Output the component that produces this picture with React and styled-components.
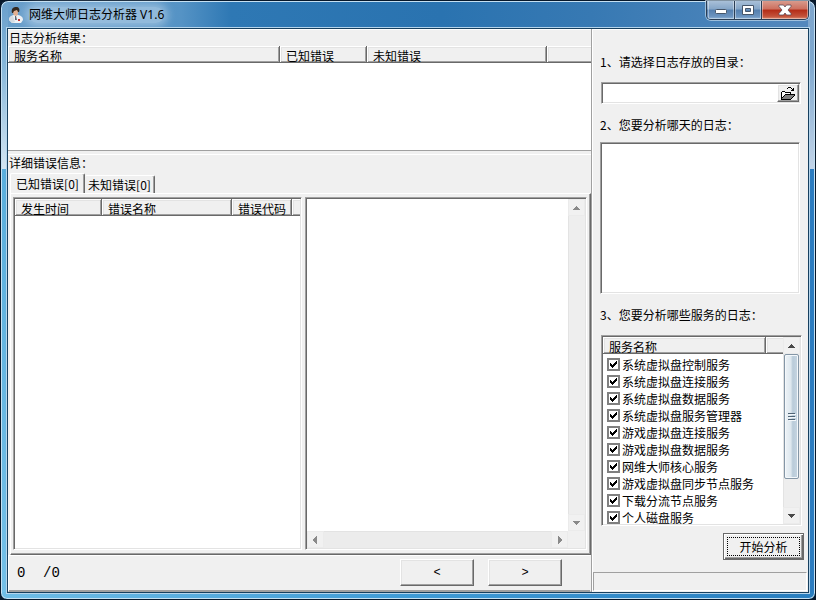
import React from "react";
import styled, { createGlobalStyle, css } from "styled-components";

const GlobalStyle = createGlobalStyle`
  * {
    box-sizing: border-box;
  }

  body {
    margin: 0;
    background: #07182b;
    color: #000;
    font-family: "Noto Sans CJK SC", "Liberation Sans", sans-serif;
    font-size: 12px;
    line-height: 16px;
  }

  button,
  input,
  textarea {
    font: inherit;
    color: inherit;
  }
`;

const sunken = css`
  border: 1px solid;
  border-color: #a0a0a0 #fff #fff #a0a0a0;
  box-shadow: inset 1px 1px 0 #696969, inset -1px -1px 0 #e3e3e3;
  padding: 1px;
  background: #fff;
`;

const raised = css`
  border: 1px solid;
  border-color: #fff #696969 #696969 #fff;
  box-shadow: inset -1px -1px 0 #a0a0a0, inset 1px 1px 0 #e3e3e3;
  background: #f0f0f0;
`;

const Window = styled.div`
  display: flex;
  flex-direction: column;
  min-height: 100vh;
  padding: 1px 5px 5px;
  border: 1px solid #07182b;
  border-radius: 8px 8px 7px 7px;
  box-shadow: inset 0 0 0 1px #c5e0f2;
  background:
    linear-gradient(90deg, #6fbde6, #3f9bd6 50%, #2a7fc0) bottom / 100% 7px no-repeat,
    linear-gradient(
        #6a9fcb,
        #83b5d9 60px,
        #d3e5f2 168px,
        #5aaedc 168px,
        #74c0e8 100%
      )
      left / 7px 100% no-repeat,
    linear-gradient(#7fa6cd, #7ea8cf 60px, #c2d4e8 168px, #2b7cc0 168px, #2b7cc0 100%)
      right / 7px 100% no-repeat,
    linear-gradient(90deg, #6a9fcb, #5593c5 180px, #2e78b4 230px, #2a73b0 440px, #3779b3 590px, #5388bd 800px);
`;

const TitleBar = styled.header`
  display: flex;
  height: 25px;
  padding: 0 1px 0 3px;
`;

const Title = styled.h1`
  display: flex;
  align-items: center;
  gap: 6px;
  flex: 1;
  margin: 0;
  font-family: "Noto Sans", "Noto Sans CJK SC", sans-serif;
  font-size: 12px;
  font-weight: normal;
`;

const TitleText = styled.span`
  border-radius: 10px;
  background: rgba(214, 231, 244, 0.45);
  box-shadow: 0 0 8px 4px rgba(214, 231, 244, 0.45);
`;

const WindowButtons = styled.div`
  display: flex;
  height: 19px;
  margin-top: -1px;
  border: 1px solid #2a3d54;
  border-top: 0;
  border-radius: 0 0 5px 5px;
  box-shadow: 0 0 0 1px rgba(214, 231, 244, 0.6);
  overflow: hidden;
`;

const WindowButton = styled.button`
  display: flex;
  align-items: center;
  justify-content: center;
  width: ${(p) => (p.$close ? 47 : 27)}px;
  padding: 0;
  border: 0;
  border-left: 1px solid ${(p) => (p.$first ? "transparent" : "#2a3d54")};
  box-shadow: inset 1px 0 0 rgba(255, 255, 255, 0.4),
    inset -1px -1px 0 rgba(255, 255, 255, 0.4);
  background: ${(p) =>
    p.$close
      ? "linear-gradient(#d99a8c, #cd6f5e 45%, #b32c17 50%, #c3523a 85%, #d98a70)"
      : "linear-gradient(#a9c0d8, #84a5c7 45%, #557fae 50%, #6b93bf 85%, #8fb3d6)"};
`;

const Client = styled.main`
  display: flex;
  flex: 1;
  border: 1px solid #b5d5ec;
  outline: 1px solid #17405f;
  outline-offset: -2px;
  padding: 1px;
  background: #f0f0f0;
`;

const LeftPane = styled.div`
  display: flex;
  flex-direction: column;
  flex: 1;
  min-width: 0;
  border-right: 1px solid #a0a0a0;
`;

const RightPane = styled.form`
  display: flex;
  flex-direction: column;
  flex: 0 0 216px;
  border-left: 1px solid #fff;
  border-top: 1px solid #fff;
`;

const SectionTitle = styled.h2`
  margin: 0;
  height: 17px;
  padding-left: 1px;
  font-size: 12px;
  font-weight: normal;
  line-height: 15px;
`;

const Results = styled.section`
  height: 122px;
  border-top: 1px solid #fff;
  border-bottom: 1px solid #a0a0a0;
  background: #fff;

  ${SectionTitle} {
    height: 16px;
    background: #f0f0f0;
  }
`;

const Details = styled.section`
  display: flex;
  flex-direction: column;
  flex: 1;
  margin-top: 3px;
  border-top: 1px solid #fff;
`;

const Table = styled.table`
  width: 100%;
  table-layout: fixed;
  border-collapse: separate;
  border-spacing: 0;
`;

const HeadCell = styled.th`
  width: ${(p) => (p.$width ? p.$width + "px" : "auto")};
  height: 17px;
  padding: 2px 0 0 6px;
  border: 0;
  box-shadow: inset -1px -1px 0 #696969, inset 1px 1px 0 #fff,
    inset -2px -2px 0 #a0a0a0, inset 2px 2px 0 #e3e3e3;
  background: #f0f0f0;
  font-weight: normal;
  line-height: 15px;
  text-align: left;
  white-space: nowrap;
  overflow: hidden;

  &:last-child {
    box-shadow: inset 0 -1px 0 #696969, inset 1px 1px 0 #fff,
      inset 0 -2px 0 #a0a0a0, inset 2px 2px 0 #e3e3e3;
  }
`;

const Tabs = styled.div`
  display: flex;
  align-items: flex-end;
  height: 21px;
  padding-left: 2px;
`;

const Tab = styled.button`
  height: ${(p) => (p.$active ? 21 : 18)}px;
  margin-bottom: ${(p) => (p.$active ? -1 : 0)}px;
  width: ${(p) => (p.$active ? 75 : 70)}px;
  padding: 0;
  border: 0;
  border-top: 1px solid #fff;
  border-left: ${(p) => (p.$active ? "1px solid #fff" : "0")};
  border-right: 1px solid #696969;
  border-radius: 2px 2px 0 0;
  box-shadow: inset -1px 0 0 #a0a0a0;
  background: #f0f0f0;
  line-height: 16px;
  white-space: nowrap;
`;

const TabPage = styled.div`
  display: flex;
  flex: 1;
  gap: 3px;
  margin: 0 0 0 2px;
  padding: 3px 3px 4px 2px;
  border: 1px solid;
  border-color: #fff #696969 #696969 #fff;
  box-shadow: inset -1px -1px 0 #a0a0a0;
`;

const ErrorList = styled.div`
  ${sunken}
  flex: 289 1 0;
  min-width: 0;
`;

const MemoBox = styled.div`
  ${sunken}
  display: grid;
  grid-template: 1fr 17px / 1fr 17px;
  flex: 282 1 0;
  min-width: 0;
  background: linear-gradient(#f0f0f0, #f0f0f0) right 1px bottom 1px / 17px 17px
    no-repeat #fff;
`;

const Memo = styled.textarea`
  width: 100%;
  height: 100%;
  padding: 2px;
  border: 0;
  outline: 0;
  resize: none;
`;

const Bar = styled.div`
  display: flex;
  flex-direction: ${(p) => (p.$horizontal ? "row" : "column")};
  background: ${(p) => (p.$horizontal ? "#ececec" : "#eeeeee")};
  box-shadow: inset 1px 1px 0 #e3e3e3;
`;

const Arrow = styled.span`
  display: flex;
  align-items: center;
  justify-content: center;
  flex: 0 0 17px;
  background: #f1f1f1;
  box-shadow: inset 0 0 0 1px #ebebeb;
`;

const Track = styled.span`
  flex: 1;
`;

const Thumb = styled.span`
  display: flex;
  align-items: center;
  justify-content: center;
  flex: 0 0 125px;
  margin: 0 1px;
  border: 1px solid #8496a6;
  border-radius: 2px;
  box-shadow: inset 0 0 0 1px #f4f8fb;
  background: linear-gradient(90deg, #eef3f7, #dde7ee 45%, #b9cbd9 60%, #c7d6e2);
`;

const Pager = styled.footer`
  display: flex;
  align-items: center;
  height: 37px;
  padding: 0 28px 2px 8px;
  border: 1px solid;
  border-color: #fff #f0f0f0 #a0a0a0 #fff;
  box-shadow: inset 0 -1px 0 #a0a0a0;
`;

const Count = styled.span`
  width: 26px;
  font-family: "Liberation Mono", monospace;
  font-size: 14px;
`;

const Spacer = styled.span`
  flex: 1;
`;

const PageButton = styled.button`
  ${raised}
  width: 74px;
  height: 27px;
  margin-left: 14px;
  padding: 0;
  font-family: "Liberation Mono", monospace;
`;

const Fields = styled.div`
  display: flex;
  flex-direction: column;
  flex: 1;
  padding: 24px 6px 12px 7px;
`;

const FieldLabel = styled.label`
  height: 16px;
  margin: ${(p) => (p.$first ? 0 : 13)}px 0 ${(p) => p.$gap || 12}px;
`;

const PathBox = styled.div`
  ${sunken}
  display: flex;
  height: 22px;
  margin: 0 1px;
`;

const PathInput = styled.input`
  flex: 1;
  min-width: 0;
  padding: 0 2px;
  border: 0;
  outline: 0;
`;

const BrowseButton = styled.button`
  ${raised}
  display: flex;
  align-items: center;
  justify-content: center;
  width: 22px;
  padding: 0;
`;

const DayList = styled.div`
  ${sunken}
  flex: 1 0 120px;
  margin-right: 2px;
`;

const ServiceBox = styled.div`
  ${sunken}
  display: flex;
  height: 191px;
  margin-left: 1px;

  > :last-child {
    flex: 0 0 17px;
  }
`;

const ServiceList = styled.div`
  flex: 1;
  min-width: 0;
  overflow: hidden;

  thead::after {
    content: "";
    display: block;
    height: 2px;
  }
`;

const ServiceCell = styled.td`
  height: 17px;
  padding: 0;
  line-height: 13px;
  white-space: nowrap;
`;

const ServiceLabel = styled.label`
  display: flex;
  align-items: center;
  gap: 2px;
  height: 17px;
  padding-left: 4px;
`;

const CheckBox = styled.span`
  display: grid;
  width: 13px;
  height: 13px;

  > * {
    grid-area: 1 / 1;
  }

  svg {
    pointer-events: none;
    visibility: hidden;
  }

  input:checked + svg {
    visibility: visible;
  }
`;

const CheckInput = styled.input`
  appearance: none;
  width: 13px;
  height: 13px;
  margin: 0;
  border: 2px solid #808080;
  background: #fff;
`;

const StartButton = styled.button`
  ${raised}
  align-self: flex-end;
  width: 81px;
  height: 27px;
  margin: 7px -2px 0 0;
  padding: 0;
  border-color: #696969;
  box-shadow: inset 1px 1px 0 #fff, inset -1px -1px 0 #696969,
    inset -2px -2px 0 #a0a0a0;
  outline: 1px dotted #000;
  outline-offset: -5px;
`;

const StatusBar = styled.div`
  height: 19px;
  margin: 0 1px 1px 0;
  border: 1px solid;
  border-color: #a0a0a0 #fff #fff #a0a0a0;
`;

const services = [
  "系统虚拟盘控制服务",
  "系统虚拟盘连接服务",
  "系统虚拟盘数据服务",
  "系统虚拟盘服务管理器",
  "游戏虚拟盘连接服务",
  "游戏虚拟盘数据服务",
  "网维大师核心服务",
  "游戏虚拟盘同步节点服务",
  "下载分流节点服务",
  "个人磁盘服务",
];

const arrows = {
  up: "M4 0h1v1h1v1h1v1h1v1H1V3h1V2h1V1h1z",
  down: "M1 0h7v1H7v1H6v1H5v1H4V3H3V2H2V1H1z",
  left: "M4 0v8H3V7H2V6H1V5H0V3h1V2h1V1h1V0z",
  right: "M0 0h1v1h1v1h1v1h1v2H3v1H2v1H1v1H0z",
};

function ArrowIcon({ dir, color }) {
  const vertical = dir === "up" || dir === "down";
  return (
    <svg
      width={vertical ? 9 : 4}
      height={vertical ? 4 : 8}
      fill={color}
      shapeRendering="crispEdges"
    >
      <path d={arrows[dir]} />
    </svg>
  );
}

function ScrollBar({ horizontal, thumb }) {
  const color = thumb ? "#4a4a4a" : "#8a8a8a";
  return (
    <Bar $horizontal={horizontal} aria-hidden="true">
      <Arrow>
        <ArrowIcon dir={horizontal ? "left" : "up"} color={color} />
      </Arrow>
      {thumb && (
        <Thumb>
          <svg width="8" height="8" shapeRendering="crispEdges">
            <path d="M0 0h7v1H0zM0 3h7v1H0zM0 6h7v1H0z" fill="#4f6475" />
            <path d="M1 1h7v1H1zM1 4h7v1H1zM1 7h7v1H1z" fill="#f4f8fb" />
          </svg>
        </Thumb>
      )}
      <Track />
      <Arrow>
        <ArrowIcon dir={horizontal ? "right" : "down"} color={color} />
      </Arrow>
    </Bar>
  );
}

function AppIcon() {
  return (
    <svg width="14" height="16" viewBox="0 0 14 16">
      <path d="M0 13c0-3 2-5 7-5s7 2 7 5l-2 3H3z" fill="#eef1f4" />
      <path d="M0 13c0-2 1-4 4-4l2 6-3 1z" fill="#d5dbe1" />
      <path d="M4 3h5v3c0 2-1 3-2 3S4 8 4 6z" fill="#e2b092" />
      <path d="M3 6c-1-4 1-6 4-6s4 2 3 5H9L8 3 5 4 4 6z" fill="#33281f" />
      <path d="M6 9h1l1 4H6z" fill="#5b6977" />
      <path d="M9 12h2v2H9z" fill="#c9302c" />
    </svg>
  );
}

function FolderIcon() {
  return (
    <svg width="14" height="13" shapeRendering="crispEdges">
      <path d="M1 5h3l1 1h5v3H3l-2 3z" fill="#fff" />
      <path d="M4 8h9v1l-3 3H1v-1z" fill="#808080" />
      <path
        d="M1 4h3v1H1zM0 5h1v7H0zM4 5h6v1H4zM9 6h1v2H9zM4 7h10v1H4zM3 8h1v1H3zM2 9h1v1H2zM1 10h1v1H1zM13 8h1v1h-1zM12 9h1v1h-1zM11 10h1v1h-1zM10 11h1v1h-1zM0 12h10v1H0zM6 1h1v1H6zM7 0h3v1H7zM10 1h1v1h-1zM11 2h1v1h-1zM12 1h1v3h-1zM10 3h2v1h-2z"
        fill="#000"
      />
    </svg>
  );
}

function CheckRow({ name }) {
  return (
    <tr>
      <ServiceCell colSpan={2}>
        <ServiceLabel>
          <CheckBox>
            <CheckInput type="checkbox" defaultChecked />
            <svg width="13" height="13" shapeRendering="crispEdges">
              <path d="M3 5h1v1h1v1h1V6h1V5h1V4h1V3h1v3H9v1H8v1H7v1H6v1H5V9H4V8H3z" />
            </svg>
          </CheckBox>
          {name}
        </ServiceLabel>
      </ServiceCell>
    </tr>
  );
}

function App() {
  return (
    <>
      <GlobalStyle />
      <Window>
        <TitleBar>
          <Title>
            <AppIcon />
            <TitleText>网维大师日志分析器 V1.6</TitleText>
          </Title>
          <WindowButtons>
            <WindowButton type="button" aria-label="最小化" $first>
              <svg width="14" height="14">
                <rect x="1.5" y="6.5" width="11" height="4" rx="1" fill="#fff" stroke="#46566a" />
              </svg>
            </WindowButton>
            <WindowButton type="button" aria-label="最大化">
              <svg width="14" height="14">
                <path
                  d="M1.500 2.500h11v9h-11zM4.500 5.500h5v3h-5z"
                  fill="#fff"
                  fillRule="evenodd"
                  stroke="#46566a"
                />
              </svg>
            </WindowButton>
            <WindowButton type="button" aria-label="关闭" $close>
              <svg width="14" height="14">
                <path
                  d="M1 2h4.500L7 4l1.500-2H13v1.500L10 7l3 3.500V12H8.500L7 10l-1.500 2H1v-1.500L4 7 1 3.500z"
                  fill="#fff"
                  stroke="#5b4a55"
                  strokeWidth="0.8"
                />
              </svg>
            </WindowButton>
          </WindowButtons>
        </TitleBar>
        <Client>
          <LeftPane>
            <Results>
              <SectionTitle>日志分析结果：</SectionTitle>
              <Table>
                <thead>
                  <tr>
                    <HeadCell $width={272}>服务名称</HeadCell>
                    <HeadCell $width={87}>已知错误</HeadCell>
                    <HeadCell $width={180}>未知错误</HeadCell>
                    <HeadCell />
                  </tr>
                </thead>
              </Table>
            </Results>
            <Details>
              <SectionTitle>详细错误信息：</SectionTitle>
              <Tabs role="tablist">
                <Tab type="button" role="tab" aria-selected="true" $active>
                  已知错误[0]
                </Tab>
                <Tab type="button" role="tab" aria-selected="false">
                  未知错误[0]
                </Tab>
              </Tabs>
              <TabPage role="tabpanel">
                <ErrorList>
                  <Table>
                    <thead>
                      <tr>
                        <HeadCell $width={87}>发生时间</HeadCell>
                        <HeadCell $width={130}>错误名称</HeadCell>
                        <HeadCell $width={60}>错误代码</HeadCell>
                        <HeadCell />
                      </tr>
                    </thead>
                  </Table>
                </ErrorList>
                <MemoBox>
                  <Memo aria-label="详细错误信息" readOnly />
                  <ScrollBar />
                  <ScrollBar horizontal />
                </MemoBox>
              </TabPage>
              <Pager>
                <Count>0</Count>
                <Count>/0</Count>
                <Spacer />
                <PageButton type="button">&lt;</PageButton>
                <PageButton type="button">&gt;</PageButton>
              </Pager>
            </Details>
          </LeftPane>
          <RightPane onSubmit={(e) => e.preventDefault()}>
            <Fields>
              <FieldLabel htmlFor="path" $first>
                1、请选择日志存放的目录：
              </FieldLabel>
              <PathBox>
                <PathInput id="path" type="text" />
                <BrowseButton type="button" aria-label="浏览">
                  <FolderIcon />
                </BrowseButton>
              </PathBox>
              <FieldLabel as="span" id="days" $gap={9}>
                2、您要分析哪天的日志：
              </FieldLabel>
              <DayList role="listbox" aria-labelledby="days" />
              <FieldLabel as="span" id="services">
                3、您要分析哪些服务的日志：
              </FieldLabel>
              <ServiceBox role="group" aria-labelledby="services">
                <ServiceList>
                  <Table>
                    <thead>
                      <tr>
                        <HeadCell $width={163}>服务名称</HeadCell>
                        <HeadCell />
                      </tr>
                    </thead>
                    <tbody>
                      {services.map((name) => (
                        <CheckRow key={name} name={name} />
                      ))}
                    </tbody>
                  </Table>
                </ServiceList>
                <ScrollBar thumb />
              </ServiceBox>
              <StartButton type="submit">开始分析</StartButton>
            </Fields>
            <StatusBar role="status" />
          </RightPane>
        </Client>
      </Window>
    </>
  );
}

export default App;
